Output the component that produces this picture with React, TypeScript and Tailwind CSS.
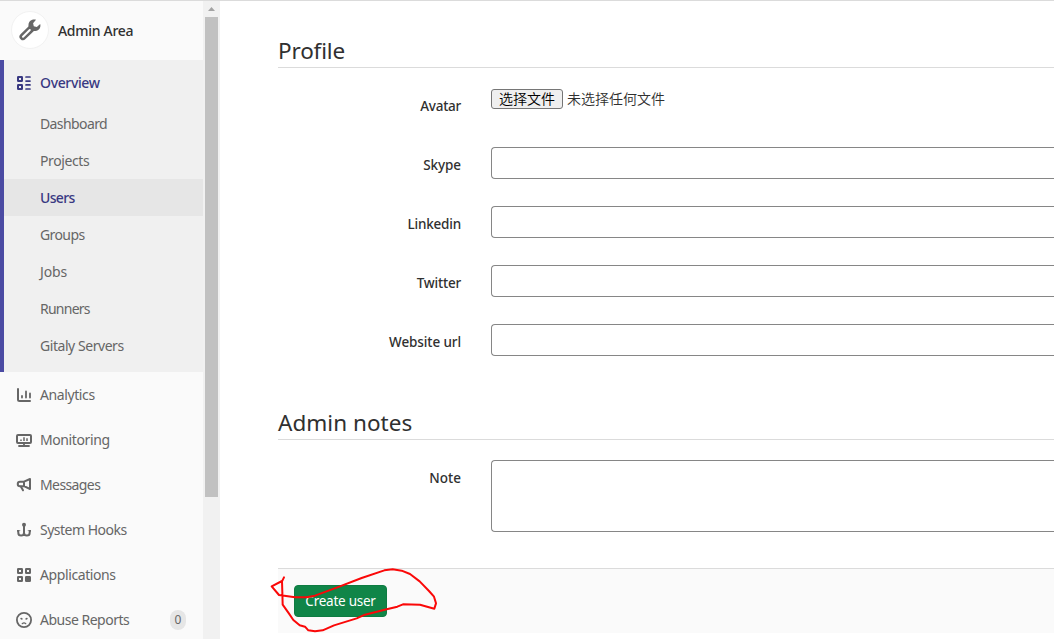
import type { ReactNode } from "react";

const icons: Record<string, ReactNode> = {
  overview: (
    <g fill="none" stroke="currentColor" strokeWidth="2">
      <rect x="2" y="2" width="4" height="4" rx=".3" />
      <rect x="2" y="10" width="4" height="4" rx=".3" />
      <path d="M10 2h4M10 6.100h4M10 9.900h4M10 14h4" strokeWidth="1.700" strokeLinecap="round" />
    </g>
  ),
  analytics: (
    <g fill="none" stroke="currentColor" strokeWidth="2" strokeLinecap="round">
      <path d="M2 2v10.500q0 1.500 1.500 1.500H14" />
      <path d="M6 9v1.500M10 4.500v6M14 6.500v4" strokeWidth="1.8" />
    </g>
  ),
  monitoring: (
    <g fill="none" stroke="currentColor" strokeWidth="2">
      <rect x="1" y="3" width="14" height="8" rx="1" />
      <path d="M8 11.500v2.500M3 14h10" strokeLinecap="round" strokeWidth="1.800" />
      <path d="M5 7.500v1.500M8 5.200v3.800M11 6.300v2.700" strokeWidth="1.500" />
    </g>
  ),
  messages: (
    <g fill="none" stroke="currentColor" strokeWidth="2" strokeLinejoin="round">
      <path d="M8 4.700H4a2.200 2.200 0 0 0 0 4.500h4M8 4.700 14 2v10L8 9.200z" />
      <path d="M5 9.700 7 13.300" strokeLinecap="round" />
    </g>
  ),
  hooks: (
    <g fill="none" stroke="currentColor" strokeWidth="2" strokeLinejoin="round">
      <path d="M8 3v9M2.300 9v1.700a2.850 2.850 0 0 0 5.700 0 2.850 2.850 0 0 0 5.700 0V9" />
      <path d="M1 10V8h3.800zM15 10V8h-3.800z" fill="currentColor" stroke="none" />
      <circle cx="8" cy="2.800" r="2" fill="currentColor" stroke="none" />
    </g>
  ),
  applications: (
    <g fill="none" stroke="currentColor" strokeWidth="2">
      <rect x="2" y="2" width="4" height="4" rx=".3" />
      <rect x="10" y="2" width="4" height="4" rx=".3" />
      <rect x="2" y="10" width="4" height="4" rx=".3" />
      <rect x="10" y="10" width="4" height="4" rx=".3" fill="currentColor" />
    </g>
  ),
  abuse: (
    <g fill="none" stroke="currentColor" strokeWidth="1.800">
      <circle cx="8" cy="8" r="7.100" />
      <path d="M6.200 11.700q1.800-1.700 3.600 0" strokeWidth="1.200" strokeLinecap="round" />
      <path d="M5 6.500l1 .5M11 6.500l-1 .5" strokeWidth="1.400" strokeLinecap="round" />
    </g>
  ),
};

function Icon({ name }: { name: string }) {
  return (
    <svg className="mt-px h-4 w-4 shrink-0" viewBox="0 0 16 16" aria-hidden="true">
      {icons[name]}
    </svg>
  );
}

const subItems = [
  { label: "Dashboard", track: "tracking-[-0.6px]" },
  { label: "Projects", track: "tracking-[-0.4px]" },
  { label: "Users", track: "tracking-[-0.65px]", active: true },
  { label: "Groups", track: "tracking-[-0.6px]" },
  { label: "Jobs", track: "tracking-[-0.1px]" },
  { label: "Runners", track: "tracking-[-0.75px]" },
  { label: "Gitaly Servers", track: "tracking-[-0.45px]" },
];

const mainItems = [
  { label: "Analytics", icon: "analytics", track: "tracking-[-0.4px]" },
  { label: "Monitoring", icon: "monitoring", track: "tracking-[-0.4px]" },
  { label: "Messages", icon: "messages", track: "tracking-[-0.6px]" },
  { label: "System Hooks", icon: "hooks", track: "tracking-[-0.5px]" },
  { label: "Applications", icon: "applications", track: "tracking-[-0.4px]" },
  { label: "Abuse Reports", icon: "abuse", track: "tracking-[-0.5px]", count: 0 },
];

function Sidebar() {
  return (
    <nav className="w-[203px] shrink-0 overflow-hidden bg-[#fafafa] text-[#666]">
      <div className="flex h-[59px] items-center pl-[11px]">
        <div className="mb-[2px] flex h-[38px] w-[38px] items-center justify-center rounded-full border border-[#f2f2f2] bg-white">
          <svg className="h-6 w-6" viewBox="0 0 24 24" aria-hidden="true">
            <path
              d="M22.200 6 18.800 9l-3-.7-.7-3L18 1.700c-3.600-.8-7.300 1.200-7.500 5-.1 1.100.1 1.600-.3 2L2.500 16.200a3.500 3.500 0 0 0 5 4.900l7.900-7.700c.5-.5 1.200-.2 2-.3 3.800-.2 5.700-3.900 4.800-7.100z"
              fill="#666"
            />
            <path d="m5 18.700 6.800-6.700" stroke="#fff" strokeWidth="2" strokeLinecap="round" />
          </svg>
        </div>
        <span className="ml-[9px] text-[14px] font-[550] tracking-[-0.3px] text-[#303030]">Admin Area</span>
      </div>
      <div className="h-[312px] border-l-4 border-[#4b4ba3] bg-[#f0f0f0]">
        <div className="flex h-[45px] items-center gap-2 pl-3 text-[#393982]">
          <Icon name="overview" />
          <span className="text-[14px] font-medium tracking-[-0.35px]">Overview</span>
        </div>
        <ul>
          {subItems.map((item) => (
            <li
              key={item.label}
              className={`flex h-[37px] items-center pl-9 text-[14px] ${item.track} ${
                item.active ? "bg-[#e6e6e6] font-medium text-[#393982]" : ""
              }`}
            >
              {item.label}
            </li>
          ))}
        </ul>
      </div>
      <ul>
        {mainItems.map((item) => (
          <li key={item.label} className="flex h-[45px] items-center gap-2 pl-4 pr-[17px] text-[14px]">
            <Icon name={item.icon} />
            <span className={item.track}>{item.label}</span>
            {item.count !== undefined && (
              <span className="ml-auto flex h-5 w-4 items-center justify-center rounded-full bg-[#e6e6e6] text-[12px]">
                {item.count}
              </span>
            )}
          </li>
        ))}
      </ul>
    </nav>
  );
}

function ScrollTrack() {
  return (
    <div className="flex w-[17px] shrink-0 flex-col bg-[#f1f1f1] pl-[2px] pr-[2px]">
      <div className="flex h-4 items-center justify-center">
        <svg className="h-1 w-[7px]" viewBox="0 0 7 4" aria-hidden="true">
          <path d="M0 4 3.500 0 7 4z" fill="#a3a3a3" />
        </svg>
      </div>
      <div className="h-[480px] bg-[#c1c1c1]" />
    </div>
  );
}

const labelClass =
  "w-[183px] shrink-0 pt-[8px] text-right text-[13.5px] leading-5 font-[550] text-[#303030]";

const fields = [
  { label: "Skype", track: "tracking-[-0.1px]" },
  { label: "Linkedin", track: "tracking-[-0.2px]" },
  { label: "Twitter", track: "tracking-[-0.2px]" },
  { label: "Website url", track: "tracking-[-0.1px]" },
];

function Main() {
  return (
    <main className="ml-[58px] min-w-0 flex-1 text-[#303030]">
      <h2 className="flex h-[67px] items-end border-b border-[#dbdbdb] text-[22.5px] leading-[32px] tracking-[-0.15px]">
        Profile
      </h2>
      <div className="mt-5 flex h-[59px]">
        <label className={`${labelClass} tracking-[-0.25px]`}>Avatar</label>
        <div className="ml-[30px] mt-px flex h-5 items-center font-['Noto_Sans_CJK_SC',sans-serif] text-[14px]">
          <button className="flex h-5 w-[72px] items-center justify-center rounded-[3px] border border-[#767676] bg-[#efefef] pb-[2px] font-[350] text-black">
            选择文件
          </button>
          <span className="ml-[4px] pb-[2px] font-[350]">未选择任何文件</span>
        </div>
      </div>
      {fields.map((field) => (
        <div key={field.label} className="flex h-[59px]">
          <label className={`${labelClass} ${field.track}`}>{field.label}</label>
          <input className="ml-[30px] h-8 min-w-0 flex-1 rounded-l border border-r-0 border-[#868686] bg-white" />
        </div>
      ))}
      <h2 className="flex h-[57px] items-end border-b border-[#dbdbdb] text-[22.5px] leading-[32px] tracking-[0.03px]">
        Admin notes
      </h2>
      <div className="mt-5 flex h-[72px]">
        <label className={labelClass}>Note</label>
        <textarea className="ml-[30px] h-[72px] min-w-0 flex-1 resize-none rounded-l border border-r-0 border-[#868686] bg-white" />
      </div>
      <div className="mt-9 flex h-[65px] items-center border-t border-[#dbdbdb] bg-[#fafafa] pl-4">
        <button className="h-8 w-[93px] rounded border border-[#0e7c42] bg-[#108548] pt-px text-[13.5px] tracking-[-0.25px] text-white">
          Create user
        </button>
      </div>
    </main>
  );
}

export default function App() {
  return (
    <div className="relative flex h-[639px] w-full overflow-hidden border-t border-[#dbdbdb] bg-white font-['Noto_Sans','Noto_Sans_CJK_SC',sans-serif]">
      <Sidebar />
      <ScrollTrack />
      <Main />
      <svg
        className="pointer-events-none absolute left-[260px] top-[554px] h-[84px] w-[200px]"
        viewBox="0 0 600 252"
        fill="none"
        stroke="#fa0808"
        strokeWidth="6"
        strokeLinejoin="round"
        strokeLinecap="round"
        aria-hidden="true"
      >
        <path d="M72 67 66 79 67 112 68 149 85 173 100 195 119 211 135 215 145 226 165 229 188 226 222 211 290 190 315 179 380 163 412 155 429 148 480 149 523 161 528 145 522 125 507 108 479 79 450 57 425 47 398 43 373 46 305 69 230 98 165 122 140 127 105 127 57 120 35 94 66 78" />
      </svg>
    </div>
  );
}
